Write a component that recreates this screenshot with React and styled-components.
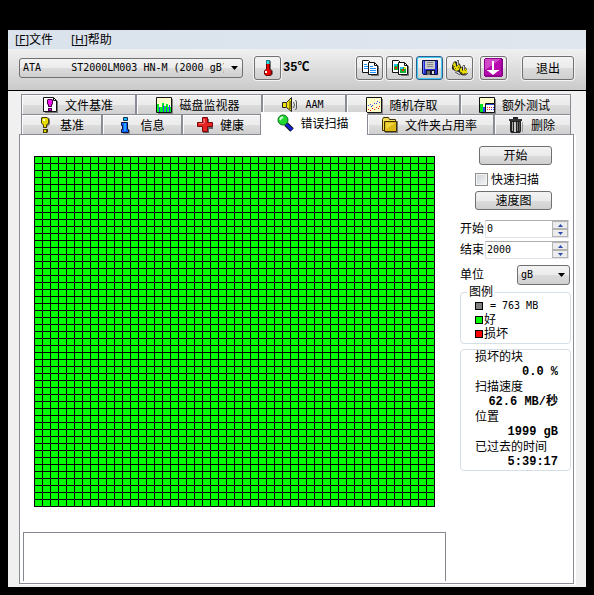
import React, { useState } from 'react';
import styled, { createGlobalStyle, css } from 'styled-components';

const MAP_COLS = 50;
const MAP_ROWS = 50;

const App = () => {
  const [quickScan, setQuickScan] = useState(false);
  const [start, setStart] = useState(0);
  const [end, setEnd] = useState(2000);

  return (
    <Screen>
      <GlobalStyle />
      <Window>
        <MenuBar>
          <MenuItem>[<u>F</u>]文件</MenuItem>
          <MenuItem>[<u>H</u>]帮助</MenuItem>
        </MenuBar>

        <Toolbar>
          <DriveSelect>
            <Select aria-label="驱动器">
              <option>{'ATA\u00a0\u00a0\u00a0\u00a0\u00a0ST2000LM003 HN-M (2000 gB)'}</option>
            </Select>
            <SelectArrow />
          </DriveSelect>
          <Temperature>
            <ToolButton aria-label="温度"><ThermometerIcon /></ToolButton>
            <TemperatureValue>35℃</TemperatureValue>
          </Temperature>
          <ToolGroup>
            <ToolButton aria-label="复制文本"><CopyTextIcon /></ToolButton>
            <ToolButton aria-label="复制图像"><CopyImageIcon /></ToolButton>
            <ToolButton aria-label="保存" $active><SaveIcon /></ToolButton>
            <ToolButton aria-label="选项"><OptionsIcon /></ToolButton>
          </ToolGroup>
          <ToolButton aria-label="下载"><DownIcon /></ToolButton>
          <ExitButton>退出</ExitButton>
        </Toolbar>

        <Content>
          <Tabs role="tablist">
            <TabRow $columns="115fr 126fr 84fr 114fr 111fr">
              <Tab role="tab"><FileBenchIcon />文件基准</Tab>
              <Tab role="tab"><MonitorIcon />磁盘监视器</Tab>
              <Tab role="tab"><SpeakerIcon /><Latin>AAM</Latin></Tab>
              <Tab role="tab"><RandomIcon />随机存取</Tab>
              <Tab role="tab"><ExtraIcon />额外测试</Tab>
            </TabRow>
            <TabRow $columns="81fr 80fr 79fr 106fr 127fr 77fr">
              <Tab role="tab"><BenchIcon />基准</Tab>
              <Tab role="tab"><InfoIcon />信息</Tab>
              <Tab role="tab"><HealthIcon />健康</Tab>
              <Tab role="tab" aria-selected $selected><SearchIcon />错误扫描</Tab>
              <Tab role="tab"><FolderIcon />文件夹占用率</Tab>
              <Tab role="tab"><TrashIcon />删除</Tab>
            </TabRow>
          </Tabs>

          <Panel role="tabpanel">
            <ScanArea>
              <BlockMap />
              <Log />
            </ScanArea>

            <Side>
              <Actions>
                <StartButton>开始</StartButton>
                <CheckLabel>
                  <Checkbox
                    type="checkbox"
                    checked={quickScan}
                    onChange={(e) => setQuickScan(e.target.checked)}
                  />
                  快速扫描
                </CheckLabel>
                <PushButton>速度图</PushButton>
              </Actions>

              <Fields>
                <SpinField id="start" label="开始" value={start} onChange={setStart} />
                <SpinField id="end" label="结束" value={end} onChange={setEnd} />
              </Fields>

              <UnitRow>
                <label htmlFor="unit">单位</label>
                <UnitSelect>
                  <Select id="unit">
                    <option>gB</option>
                  </Select>
                  <SelectArrow />
                </UnitSelect>
              </UnitRow>

              <Legend>
                <legend>图例</legend>
                <LegendRow><Swatch $color="#808080" /><LegendSize>= 763 MB</LegendSize></LegendRow>
                <LegendRow><Swatch $color="#00ff00" />好</LegendRow>
                <LegendRow><Swatch $color="#ff0000" />损坏</LegendRow>
              </Legend>

              <Stats>
                <dt>损坏的块</dt>
                <dd>0.0 %</dd>
                <dt>扫描速度</dt>
                <dd>62.6 MB/秒</dd>
                <dt>位置</dt>
                <dd>1999 gB</dd>
                <dt>已过去的时间</dt>
                <dd>5:39:17</dd>
              </Stats>
            </Side>
          </Panel>
        </Content>
      </Window>
    </Screen>
  );
};

const SpinField = ({ id, label, value, onChange }) => (
  <FieldRow>
    <label htmlFor={id}>{label}</label>
    <Spin>
      <SpinInput
        id={id}
        type="number"
        value={value}
        onChange={(e) => onChange(Number(e.target.value))}
      />
      <SpinButtons>
        <SpinButton aria-label={`${label} +`} onClick={() => onChange(value + 1)}>
          <svg width="5" height="3" viewBox="0 0 5 3"><path d="M0 3L2.5 0L5 3z" fill="#2f4aa8" /></svg>
        </SpinButton>
        <SpinButton aria-label={`${label} -`} onClick={() => onChange(value - 1)}>
          <svg width="5" height="3" viewBox="0 0 5 3"><path d="M0 0L2.5 3L5 0z" fill="#2f4aa8" /></svg>
        </SpinButton>
      </SpinButtons>
    </Spin>
  </FieldRow>
);

const SelectArrow = () => (
  <ArrowSvg width="7" height="4" viewBox="0 0 7 4">
    <path d="M0 0h7L3.5 4z" fill="#000" />
  </ArrowSvg>
);

// Icons

const ThermometerIcon = () => (
  <Icon viewBox="0 0 16 16">
    <path d="M8 1h3v8l2 2v3l-2 2H7z" fill="#777" />
    <path d="M6 0h4v9l2 2v3l-2 2H6l-2-2v-3l2-2z" fill="#600" />
    <path d="M7 1h2v8l2 2v2l-1 2H6l-1-2v-2l2-2z" fill="#f00000" />
    <path d="M6 0h4v4H6z" fill="#187c80" />
    <path d="M7 1h2v3H7z" fill="#30dce0" />
    <path d="M5 11h2v2H5z" fill="#fff" />
  </Icon>
);

const CopyTextIcon = () => (
  <Icon viewBox="0 0 16 16">
    <path d="M9 15h7V6h1v10H9z" fill="#777" />
    <path d="M.5.5h6l3 3v9h-9z" fill="#fff" stroke="#111" />
    <path d="M2 4.500h3M2 6.500h5M2 8.500h5" stroke="#1e90ff" />
    <path d="M6.500 2.500h6l3 3v9h-9z" fill="#fff" stroke="#111" />
    <path d="M12.500 2.500v3h3" fill="none" stroke="#111" />
    <path d="M8 6.500h3M8 8.500h6M8 10.500h6M8 12.500h6" stroke="#1e90ff" />
  </Icon>
);

const CopyImageIcon = () => (
  <Icon viewBox="0 0 16 16">
    <path d="M9 15h7V6h1v10H9z" fill="#777" />
    <path d="M.5.5h6l3 3v9h-9z" fill="#fff" stroke="#111" />
    <path d="M2 4h4v6H2z" fill="#10b030" />
    <path d="M2 4h3v2H2z" fill="#20bfff" />
    <path d="M3 7h2v2H3z" fill="#f02010" />
    <path d="M6.500 2.500h6l3 3v9h-9z" fill="#fff" stroke="#111" />
    <path d="M12.500 2.500v3h3" fill="none" stroke="#111" />
    <path d="M8 7h6v6H8z" fill="#10b030" />
    <path d="M8 7h3v2H8z" fill="#20bfff" />
    <path d="M10 9h2v2h-2z" fill="#f02010" />
    <path d="M12 7h2v2h-2z" fill="#e8e010" />
  </Icon>
);

const SaveIcon = () => (
  <Icon viewBox="0 0 16 16">
    <path d="M.5.5h15v14h-14l-1-1z" fill="#2430d0" stroke="#0c0c3c" />
    <path d="M3 1h10v8H3z" fill="#c8c8c8" />
    <path d="M5 2.500h6M5 4.500h6M5 6.500h6" stroke="#888" />
    <path d="M4 10h9v5H4z" fill="#15152c" />
    <path d="M10 11h2v3h-2z" fill="#e0e0e0" />
    <path d="M5 11h3v4H5z" fill="#666" />
    <path d="M1 1h1v12H1z" fill="#6878ff" />
  </Icon>
);

const OptionsIcon = () => (
  <Icon viewBox="0 0 16 16">
    <path d="M0 6l1-3 2-2 2 1 3 2 1 3 3-1 3 3v4l-2 2h-4l-2-3-4-1-3-2z" fill="#222" />
    <path d="M1 4l2-2 1 3v2l3-3 1 3-1 3-3 1-2-2z" fill="#e8dc00" />
    <path d="M8 9l2-2v4l3-3 2 2v3l-3 1-3-1-1-2z" fill="#e8dc00" />
    <path d="M3 8h1v1H3zM6 7h1v1H6zM2 6h1v1H2zM9 12h1v1H9zM12 13h1v1h-1zM13 10h1v1h-1z" fill="#776c00" />
    <path d="M5 0h2v5H5zM11 5h2v5h-2z" fill="#666" />
    <path d="M5 1h1v4H5zM11 6h1v4h-1z" fill="#d8d8d8" />
    <path d="M3 12l5 3M10 15h4l2-2" fill="none" stroke="#555" />
  </Icon>
);

const DownIcon = () => (
  <LargeIcon viewBox="0 0 19 19">
    <path d="M1 0h17v1h1v17h-1v1H1v-1H0V1h1z" fill="#8c008c" />
    <path d="M1 1h16v16H1z" fill="#b808b0" />
    <path d="M1 1h16L1 12z" fill="#d048c8" />
    <path d="M8 3h2v9h5v1h-1l-5 4-5-4H3v-1h5z" fill="#fff" />
  </LargeIcon>
);

const FileBenchIcon = () => (
  <Icon viewBox="0 0 16 16">
    <path d="M3 15h12V4h1v12H3z" fill="#777" />
    <path d="M1.500.5h10l3 3v11h-13z" fill="#fff" stroke="#111" />
    <path d="M11.500.5v3h3" fill="none" stroke="#111" />
    <path d="M6 2h4l1 1v4l-1 1v2H6V8L5 7V3z" fill="#500050" />
    <path d="M6 3h4v4H9v2H7V7H6z" fill="#f010f0" />
    <path d="M6 11h4v3H6z" fill="#500050" />
    <path d="M7 12h2v1H7z" fill="#f010f0" />
  </Icon>
);

const MonitorIcon = () => (
  <Icon viewBox="0 0 16 16">
    <path d="M2 16h14V2h1v15H2z" fill="#888" />
    <path d="M.5.5h15v15H.5z" fill="#ffffcc" stroke="#111" />
    <path d="M1 7h2v3h3V6h2v3h2V7h2v3h3v5H1z" fill="#00f020" />
    <path d="M3 10h1v5H3zM7 8h1v7H7zM10 10h1v5h-1zM13 8h1v7h-1z" fill="#3040ff" />
  </Icon>
);

const SpeakerIcon = () => (
  <Icon viewBox="0 0 16 16">
    <path d="M.5 5.500h4l5-5v14l-5-4h-4z" fill="#f0e010" stroke="#222" />
    <path d="M7 4h2v8H7z" fill="#948800" />
    <path d="M4.500 6v4" stroke="#444" />
    <path d="M11.500 5l1 3-1 3M13.500 3l1 2v6l-1 2" fill="none" stroke="#555" />
  </Icon>
);

const RandomIcon = () => (
  <Icon viewBox="0 0 16 16">
    <path d="M2 16h14V2h1v15H2z" fill="#888" />
    <path d="M.5.5h15v15H.5z" fill="#ffffcc" stroke="#111" />
    <path d="M2 8h1v1H2zM4 7h1v1H4zM6 8h1v1H6zM8 6h1v1H8zM10 6h1v1h-1zM11 4h1v1h-1zM13 5h1v1h-1zM5 9h1v1H5z" fill="#3040ff" />
    <path d="M2 12h1v1H2zM4 13h1v1H4zM6 11h1v1H6zM8 12h1v1H8zM10 10h1v1h-1zM12 11h1v1h-1zM13 9h1v1h-1z" fill="#f02020" />
  </Icon>
);

const ExtraIcon = () => (
  <Icon viewBox="0 0 16 16">
    <path d="M2 16h14V2h1v15H2z" fill="#888" />
    <path d="M.5.5h15v15H.5z" fill="#ffffcc" stroke="#111" />
    <path d="M1 7h3v8H1z" fill="#00e020" />
    <path d="M4 10h2v5H4z" fill="#3040ff" />
    <path d="M6.500 6.500h9v9h-9z" fill="#fff" stroke="#111" />
    <path d="M7 7h8v1H7z" fill="#3040d0" />
    <path d="M8 10h1v1H8zM10 10h1v1h-1zM12 10h1v1h-1zM8 12h1v1H8zM10 12h1v1h-1z" fill="#f02020" />
    <path d="M12 12h1v1h-1zM14 10h1v1h-1zM14 12h1v1h-1z" fill="#3040ff" />
  </Icon>
);

const BenchIcon = () => (
  <Icon viewBox="0 0 16 16">
    <path d="M6 1h6l1 2v4l-3 3v1H7V9L5 7V2z" fill="#777" />
    <path d="M5 0h5l2 2v4l-2 2v3H6V8L4 6V1z" fill="#4a4200" />
    <path d="M6 1h4l1 1v4L9 8v2H7V8L5 6V2z" fill="#e8dc00" />
    <path d="M6 2h2v2H6z" fill="#ffffd0" />
    <path d="M6 12h5v3l-1 1H6z" fill="#4a4200" />
    <path d="M7 13h2v2H7z" fill="#e8dc00" />
  </Icon>
);

const InfoIcon = () => (
  <Icon viewBox="0 0 16 16">
    <path d="M6.500.5h4v3h-4z" fill="#18b8ff" stroke="#083050" />
    <path d="M4.500 5.500h6v7h1v3h-7v-3h1v-4h-1z" fill="#1060ff" stroke="#06163c" />
    <path d="M7 6h2v8H7z" fill="#28a0ff" />
    <path d="M12.500 13v3.500H6" fill="none" stroke="#888" />
  </Icon>
);

const HealthIcon = () => (
  <Icon viewBox="0 0 16 16">
    <path d="M6 2h6v4h4v6h-4v4H6z" fill="#666" />
    <path d="M5.500.5h5v5h5v4h-5v5h-5v-5h-5v-4h5z" fill="#e42222" stroke="#7a0808" />
    <path d="M6 2h2v4H2v1h5z" fill="#ff7070" />
  </Icon>
);

const SearchIcon = () => (
  <Icon viewBox="0 0 16 16">
    <path d="M9 9l6 6" stroke="#111" strokeWidth="5" />
    <path d="M9 9l6 6" stroke="#1020d0" strokeWidth="3" />
    <circle cx="6" cy="5" r="5" fill="#20d830" stroke="#087018" />
    <path d="M3 5l1-2 2-1" fill="none" stroke="#c8ffd0" strokeWidth="2" />
  </Icon>
);

const FolderIcon = () => (
  <Icon viewBox="0 0 16 16">
    <path d="M3 15h12V4h1v12H3z" fill="#777" />
    <path d="M.5 2.500l1-2h5l1 2h6v11h-13z" fill="#f4dc58" stroke="#3c3000" />
    <path d="M2.500 4.500h12v10h-12z" fill="#dcb818" stroke="#3c3000" />
    <path d="M4 6h9L4 12z" fill="#f0d440" />
  </Icon>
);

const TrashIcon = () => (
  <Icon viewBox="0 0 16 16">
    <path d="M5 0h5v2H5z" fill="#222" />
    <path d="M1 2h13v2H1z" fill="#333" />
    <path d="M2 4h11v10l-1 2H3l-1-2z" fill="#222" />
    <path d="M4 5h1v9H4z" fill="#aaa" />
    <path d="M6 5h2v10H6z" fill="#ccc" />
    <path d="M9 5h1v9H9z" fill="#777" />
    <path d="M11 5h1v9h-1z" fill="#555" />
    <path d="M14.500 5v10" stroke="#999" />
  </Icon>
);

export default App;

// Styled Components
const GlobalStyle = createGlobalStyle`
  * {
    box-sizing: border-box;
  }

  body {
    margin: 0;
    background: #000;
    color: #000;
    font-family: "Noto Sans CJK SC", sans-serif;
    font-size: 12px;
    line-height: 14px;
  }

  button, input, select {
    margin: 0;
    padding: 0;
    color: inherit;
    font: inherit;
  }
`;

const Screen = styled.div`
  display: flex;
  min-height: 100vh;
  padding: 30px 8px 8px;
`;

const Window = styled.main`
  display: flex;
  flex: 1;
  flex-direction: column;
  background: #f0f0f0;
`;

const MenuBar = styled.nav`
  display: flex;
  gap: 18px;
  height: 19px;
  padding: 0 7px;
  background: linear-gradient(90deg, #dae2ec, #dfe6ee);
`;

const MenuItem = styled.button`
  border: 0;
  background: none;
  font-family: "Open Sans", "Noto Sans CJK SC", sans-serif;
`;

const Toolbar = styled.header`
  display: flex;
  align-items: center;
  height: 42px;
  padding: 0 12px 4px 11px;
  border-bottom: 1px solid #000;
  background: linear-gradient(#f0f0f0, #cacaca);
`;

const raised = css`
  border: 1px solid #707070;
  border-radius: 3px;
  background: linear-gradient(#f3f3f3, #ebebeb 50%, #dcdcdc 51%, #cfcfcf);
`;

const SelectBox = styled.div`
  display: grid;
  align-items: center;
  height: 20px;
  ${raised}
`;

const DriveSelect = styled(SelectBox)`
  width: 224px;
`;

const Select = styled.select`
  grid-area: 1 / 1;
  width: 100%;
  padding: 0 0 0 3px;
  border: 0;
  border-right: 18px solid transparent;
  appearance: none;
  background: none;
  font-family: "DejaVu Sans Mono", monospace;
  font-size: 10px;
`;

const ArrowSvg = styled.svg`
  grid-area: 1 / 1;
  justify-self: end;
  margin-right: 4px;
  pointer-events: none;
`;

const Temperature = styled.div`
  display: flex;
  align-items: center;
  gap: 2px;
  margin: 0 auto 0 11px;
`;

const TemperatureValue = styled.strong`
  font-family: "Liberation Mono", "Noto Sans CJK SC", monospace;
`;

const ToolGroup = styled.div`
  display: flex;
  gap: 3px;
  margin-right: 7px;
`;

const ToolButton = styled.button`
  display: flex;
  align-items: center;
  justify-content: center;
  width: 27px;
  height: 24px;
  ${raised}
  box-shadow: 0 0 0 1px #f4f4f4;

  ${(props) => props.$active && css`
    border-color: #2c628b;
    box-shadow: inset 0 0 0 1px #48c8f4;
  `}
`;

const ExitButton = styled(ToolButton)`
  width: 52px;
  margin-left: 15px;
`;

const Content = styled.section`
  display: flex;
  flex: 1;
  flex-direction: column;
  padding: 3px 12px 3px 11px;
`;

const Tabs = styled.div`
  padding: 0 3px 0 2px;
`;

const TabRow = styled.div`
  display: grid;
  grid-template-columns: ${(props) => props.$columns};
  height: 20px;
`;

const Tab = styled.button`
  display: flex;
  align-items: center;
  justify-content: center;
  gap: 7px;
  padding-right: 2px;
  border: 1px solid #898c95;
  border-width: 1px 1px 0;
  background: linear-gradient(#f2f2f2, #ebebeb 50%, #dddddd 51%, #cfcfcf);
  box-shadow: inset 1px 1px #fcfcfc;
  white-space: nowrap;

  ${(props) => props.$selected && css`
    z-index: 1;
    margin: -2px 0 -1px;
    padding-bottom: 3px;
    border-color: #fff;
    background: #fff;
  `}
`;

const Latin = styled.span`
  font-family: "DejaVu Sans Mono", monospace;
  font-size: 10px;
`;

const Icon = styled.svg`
  flex: none;
  width: 16px;
  height: 16px;
  overflow: visible;
`;

const LargeIcon = styled(Icon)`
  width: 19px;
  height: 19px;
`;

const Panel = styled.div`
  display: flex;
  flex: 1;
  gap: 14px;
  padding: 0 2px 2px 3px;
  border: 1px solid #898c95;
  background: #fff;
  box-shadow: 2px 1px #fff;
`;

const ScanArea = styled.div`
  display: flex;
  flex: 1;
  flex-direction: column;
  gap: 25px;
  padding-top: 21px;
`;

/* one 8x7 cell per block, the last line closes the grid */
const BlockMap = styled.div`
  width: ${MAP_COLS * 8 + 1}px;
  height: ${MAP_ROWS * 7 + 1}px;
  margin-left: 11px;
  background:
    repeating-linear-gradient(90deg, #000 0 1px, transparent 1px 8px),
    repeating-linear-gradient(#000 0 1px, transparent 1px 7px),
    #00ff00;
`;

const Log = styled.div`
  flex: 1;
  min-height: 49px;
  border: 1px solid #828790;
  border-bottom: 0;
`;

const Side = styled.aside`
  width: 111px;
  padding-top: 11px;
  font-family: "Liberation Sans", "Noto Sans CJK SC", sans-serif;
`;

const Actions = styled.div`
  display: flex;
  flex-direction: column;
  padding: 0 19px 0 15px;
`;

const PushButton = styled.button`
  height: 19px;
  ${raised}
`;

const StartButton = styled(PushButton)`
  margin-left: 4px;
`;

const CheckLabel = styled.label`
  display: flex;
  align-items: center;
  gap: 3px;
  height: 26px;
  padding-top: 3px;
  white-space: nowrap;
`;

const Checkbox = styled.input`
  flex: none;
  width: 13px;
  height: 13px;
  border: 1px solid #8e8f8f;
  appearance: none;
  background: linear-gradient(135deg, #cbcfd5, #f6f6f6);
  box-shadow: inset 0 0 0 1px #f4f4f4;

  &:checked {
    background: #4a62b4;
  }
`;

const Fields = styled.div`
  display: flex;
  flex-direction: column;
  gap: 3px;
  margin-top: 10px;
`;

const FieldRow = styled.div`
  display: flex;
  align-items: center;
  gap: 1px;
  padding-right: 2px;
`;

const Spin = styled.div`
  display: flex;
  flex: 1;
  height: 18px;
  border: 1px solid #e2e3ea;
  border-top-color: #abadb3;
`;

const SpinInput = styled.input`
  flex: 1;
  width: 0;
  padding-left: 1px;
  border: 0;
  appearance: textfield;
  font-family: "DejaVu Sans Mono", monospace;
  font-size: 10px;

  &::-webkit-inner-spin-button {
    appearance: none;
  }
`;

const SpinButtons = styled.div`
  display: flex;
  flex-direction: column;
  width: 16px;
`;

const SpinButton = styled.button`
  display: flex;
  flex: 1;
  align-items: center;
  justify-content: center;
  border: 1px solid #b4b4b4;
  background: #ececec;
`;

const UnitRow = styled.div`
  display: flex;
  align-items: center;
  justify-content: space-between;
  margin-top: 6px;
  padding-right: 1px;
`;

const UnitSelect = styled(SelectBox)`
  width: 53px;
`;

const Legend = styled.fieldset`
  margin: 0;
  padding: 0 0 2px 14px;
  border: 1px solid #d5dfe5;
  border-radius: 4px;

  legend {
    margin-left: -8px;
    padding: 0 2px;
  }
`;

const LegendRow = styled.div`
  display: flex;
  align-items: center;
  gap: 1px;
  height: 14px;
`;

const Swatch = styled.span`
  width: 8px;
  height: 8px;
  border: 1px solid #000;
  background: ${(props) => props.$color};
`;

const LegendSize = styled(Latin)`
  margin-left: 6px;
`;

const Stats = styled.dl`
  margin: 5px 0 0;
  padding: 0 12px 0 14px;
  border: 1px solid #d5dfe5;
  border-radius: 4px;
  line-height: 15px;
  white-space: nowrap;

  dt {
    height: 15px;
  }

  dd {
    height: 15px;
    margin: 0;
    font-family: "Liberation Mono", "Noto Sans CJK SC", monospace;
    font-weight: bold;
    text-align: right;
  }
`;
